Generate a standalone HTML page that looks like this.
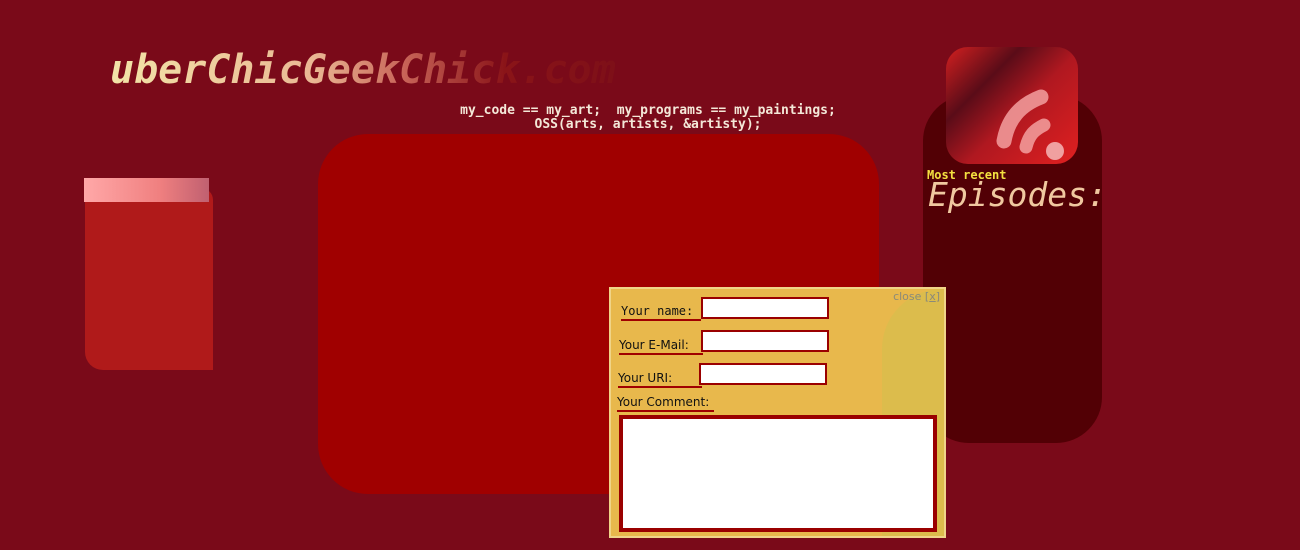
<!DOCTYPE html>
<html><head><style>
body{margin:0;width:1300px;height:550px;background:#7a0a19;position:relative;overflow:hidden;font-family:"DejaVu Sans",sans-serif}
.a{position:absolute}
.title{left:110px;top:45px;font:italic bold 40px "DejaVu Sans Mono",monospace;background:linear-gradient(90deg,#f3e4a8 0%,#eab894 40%,#c86458 58%,#8a1418 78%,#7e1018 100%);-webkit-background-clip:text;background-clip:text;color:transparent;white-space:nowrap;line-height:50px}
.code{left:440px;top:104px;width:416px;text-align:center;font:bold 13px/14px "DejaVu Sans Mono",monospace;color:#f4e8d8;white-space:pre}
label{position:absolute;font-size:12px;color:#111;border-bottom:2px solid #a00000;line-height:14px;padding-bottom:1px}
.in{position:absolute;background:#fff;border:2px solid #9a0000;height:18px;width:124px}
</style></head><body>
<div class="a title">uberChicGeekChick.com</div>
<div class="a code">my_code == my_art;  my_programs == my_paintings;
OSS(arts, artists, &amp;artisty);</div>
<div class="a" style="left:85px;top:188px;width:128px;height:182px;background:#b01a1a;border-radius:10px 12px 0 18px"></div>
<div class="a" style="left:84px;top:178px;width:125px;height:24px;background:linear-gradient(90deg,#ffa8a8,#f08080 60%,#c06070)"></div>
<div class="a" style="left:318px;top:134px;width:561px;height:360px;background:#a00000;border-radius:50px"></div>
<div class="a" style="left:923px;top:95px;width:179px;height:348px;background:#520005;border-radius:46px"></div>
<div class="a" style="left:946px;top:47px;width:132px;height:117px;border-radius:22px;background:linear-gradient(135deg,#d42020 0%,#5a0c18 30%,#b01820 55%,#e02020 100%);overflow:hidden">
<svg width="132" height="117" viewBox="0 0 132 117"><g fill="none" stroke="#f4a0a0" stroke-linecap="round" opacity="0.85"><path d="M58 94 C62 72 74 58 95 50" stroke-width="15"/><path d="M80 100 C83 88 88 83 98 78" stroke-width="13"/></g><circle cx="109" cy="104" r="9" fill="#f0a0a0"/></svg></div>
<div class="a" style="left:927px;top:168px;font:bold 12px 'DejaVu Sans Mono',monospace;color:#f4e040">Most recent</div>
<div class="a" style="left:928px;top:175px;font:italic 33px 'DejaVu Sans Mono',monospace;color:#f0c8a0">Episodes:</div>
<div class="a" style="left:609px;top:287px;width:333px;height:247px;background:#e8b84c;border:2px solid #f0d488">
<div class="a" style="right:0;top:0;width:62px;height:247px;background:#dcbc4c;border-radius:60px 0 0 0"></div>
<div class="a" style="right:4px;top:1px;font-size:11px;color:#8a8a7a">close [<u>x</u>]</div>
<label style="left:10px;top:15px;width:80px;font-family:'DejaVu Sans Mono',monospace;font-size:12px">Your name:</label>
<div class="in" style="left:90px;top:8px"></div>
<label style="left:8px;top:49px;width:84px;font-size:12px">Your E-Mail:</label>
<div class="in" style="left:90px;top:41px"></div>
<label style="left:7px;top:82px;width:84px;font-size:12px">Your URI:</label>
<div class="in" style="left:88px;top:74px"></div>
<label style="left:6px;top:106px;width:97px;font-size:12px">Your Comment:</label>
<div class="a" style="left:8px;top:126px;width:310px;height:109px;background:#fff;border:4px solid #9a0000"></div>
</div>
</body></html>
